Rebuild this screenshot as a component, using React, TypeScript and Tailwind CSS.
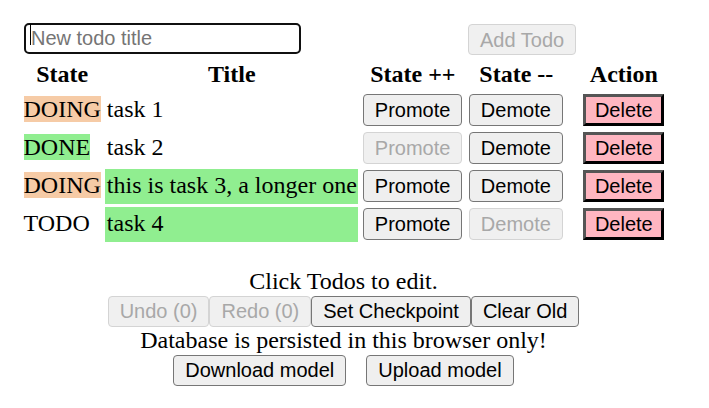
import React from 'react';

type Todo = {
  id: number;
  state: 'TODO' | 'DOING' | 'DONE';
  title: string;
  highlight: boolean;
};

const TODOS: Todo[] = [
  { id: 1, state: 'DOING', title: 'task 1', highlight: false },
  { id: 2, state: 'DONE', title: 'task 2', highlight: false },
  { id: 3, state: 'DOING', title: 'this is task 3, a longer one', highlight: true },
  { id: 4, state: 'TODO', title: 'task 4', highlight: true },
];

const STATE_BG = {
  DOING: 'bg-[#f6cba6]',
  DONE: 'bg-[#90ee90]',
  TODO: '',
};

function Btn({
  children,
  disabled,
  className = '',
}: {
  children: React.ReactNode;
  disabled?: boolean;
  className?: string;
}) {
  return (
    <button
      disabled={disabled}
      className={`h-[31px] whitespace-nowrap rounded-[4px] border px-[11px] font-['Liberation_Sans',Arial,sans-serif] text-[20px] leading-none ${
        disabled
          ? 'border-[#d4d4d4] bg-[#f0f0f0] text-[#a8a8a8]'
          : 'border-[#767676] bg-[#efefef] text-black'
      } ${className}`}
    >
      {children}
    </button>
  );
}

export default function App() {
  return (
    <div className="h-[408px] w-[709px] overflow-hidden bg-white font-['Liberation_Serif','Times_New_Roman',serif] text-[24px] text-black">
      <div className="flex h-[55px] items-end pl-[24px]">
        <div className="relative">
          <input
            autoFocus
            placeholder="New todo title"
            className="h-[31px] w-[277px] rounded-[5px] border-2 border-[#101010] bg-white pl-[5px] font-['Liberation_Sans',Arial,sans-serif] text-[20px] text-black outline-none placeholder:text-[#757575]"
          />
          {/* caret */}
          <span className="pointer-events-none absolute left-[6px] top-[5px] h-[21px] w-px bg-black" />
        </div>
        <Btn disabled className="ml-[167px]">
          Add Todo
        </Btn>
      </div>

      <table className="ml-[19px] mt-[1px] table-fixed border-separate border-spacing-[3px] leading-[1.15]">
        <thead>
          <tr>
            <th className="w-[80px] p-[1.5px] text-center font-bold">State</th>
            <th className="w-[253px] p-[1.5px] text-center font-bold">Title</th>
            <th className="w-[103px] p-[1.5px] text-center font-bold">State ++</th>
            <th className="w-[98px] p-[1.5px] text-center font-bold">State --</th>
            <th className="w-[111px] p-[1.5px] text-center font-bold">Action</th>
          </tr>
        </thead>
        <tbody>
          {TODOS.map((t) => (
            <tr key={t.id}>
              <td className="h-[35px] p-[1.5px] text-left align-middle">
                <span className={STATE_BG[t.state]}>{t.state}</span>
              </td>
              <td
                className={`p-[1.5px] text-left align-middle whitespace-nowrap ${
                  t.highlight ? 'bg-[#90ee90]' : ''
                }`}
              >
                {t.title}
              </td>
              <td className="p-[1.5px] align-middle">
                <Btn disabled={t.state === 'DONE'} className="h-[32px]">
                  Promote
                </Btn>
              </td>
              <td className="p-[1.5px] align-middle">
                <Btn disabled={t.state === 'TODO'} className="h-[32px]">
                  Demote
                </Btn>
              </td>
              <td className="p-[1.5px] text-center align-middle">
                <button className="h-[32px] border-[3px] border-t-[#555] border-l-[#555] border-b-black border-r-black bg-[#ffb6c1] px-[8.5px] font-['Liberation_Sans',Arial,sans-serif] text-[20px] leading-none text-black">
                  Delete
                </button>
              </td>
            </tr>
          ))}
        </tbody>
      </table>

      <div className="ml-[12px] mt-[23px] w-[663px] text-center leading-[1.15]">
        <div className="h-[28px]">Click Todos to edit.</div>
        <div className="flex justify-center">
          <Btn disabled>Undo (0)</Btn>
          <Btn disabled>Redo (0)</Btn>
          <Btn>Set Checkpoint</Btn>
          <Btn>Clear Old</Btn>
        </div>
        <div className="h-[28px]">Database is persisted in this browser only!</div>
        <div className="flex justify-center gap-[20px]">
          <Btn>Download model</Btn>
          <Btn>Upload model</Btn>
        </div>
      </div>
    </div>
  );
}
